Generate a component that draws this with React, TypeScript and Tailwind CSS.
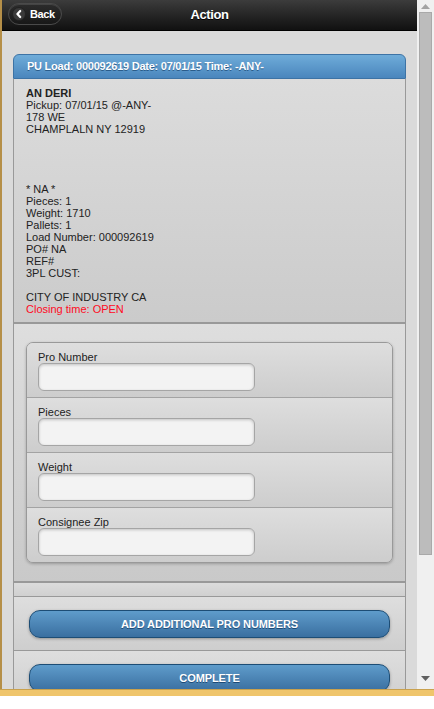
function BackIcon() {
  return (
    <svg width="14" height="14" viewBox="0 0 14 14">
      <circle cx="7" cy="7" r="6.5" fill="#3a3a3a" stroke="#222" />
      <path d="M8.2 4 L5.4 7 L8.2 10" fill="none" stroke="#fff" strokeWidth="2.2" strokeLinecap="round" strokeLinejoin="round" />
    </svg>
  );
}

function Field({ label, last }: { label: string; last?: boolean }) {
  return (
    <div
      className={
        "bg-gradient-to-b from-[#dedede] to-[#cdcdcd] px-[11px] pt-[7px] pb-[6px] " +
        (last ? "" : "border-b border-[#a3a3a3]")
      }
    >
      <div className="h-[14px] text-[11px] leading-[14px] text-[#222]">{label}</div>
      <div className="mt-[-1px] h-[28px] w-[217px] rounded-[6px] border border-[#a5a5a5] bg-[#f3f3f3] shadow-[inset_0_1px_3px_rgba(0,0,0,0.2)]" />
    </div>
  );
}

function BlueButton({ text }: { text: string }) {
  return (
    <div className="flex h-[28px] w-[361px] items-center justify-center rounded-[11px] border border-[#1d4d75] bg-gradient-to-b from-[#5f9ccb] to-[#3a6fa0] text-[11px] font-bold tracking-[-0.1px] text-white shadow-[0_1px_3px_rgba(0,0,0,0.3)] [text-shadow:0_1px_0_#1d4a76]">
      {text}
    </div>
  );
}

export default function App() {
  return (
    <div className="flex h-[709px] w-[434px] flex-col bg-white font-['Liberation_Sans',Arial,sans-serif]">
      <div className="flex h-[689px]">
        <div className="w-[2px] bg-[#b58f48]" />

        <div className="flex w-[415px] flex-col overflow-hidden bg-[#dadada]">
          {/* header */}
          <div className="relative flex h-[31px] shrink-0 items-center justify-center border-b border-[#000] bg-gradient-to-b from-[#3c3c3c] to-[#111]">
            <div className="text-[13px] font-bold tracking-[-0.4px] text-white [text-shadow:0_1px_0_#000]">Action</div>
            <div className="absolute left-[6px] top-[3px] flex h-[22px] w-[54px] items-center gap-[4px] rounded-full border border-[#4a4a4a] bg-gradient-to-b from-[#2c2c2c] to-[#181818] pl-[3px] shadow-[inset_0_1px_0_rgba(255,255,255,0.12)]">
              <BackIcon />
              <span className="text-[11px] font-bold tracking-[-0.4px] text-white">Back</span>
            </div>
          </div>

          <div className="px-[11px] pt-[23px]">
            {/* collapsible */}
            <div className="flex h-[25px] items-center rounded-t-[6px] border border-[#3d73a5] bg-gradient-to-b from-[#6facd9] to-[#4a86bd] pl-[13px] text-[11px] font-bold tracking-[-0.25px] text-white [text-shadow:0_1px_0_#2a5c8a]">
              PU Load: 000092619 Date: 07/01/15 Time: -ANY-
            </div>
            <div className="border-x border-b-2 border-[#999] bg-gradient-to-b from-[#dcdcdc] to-[#cbcbcb] pl-[12px] pt-[8px] pb-[7px] text-[11px] leading-[12px] text-[#222]">
              <div className="font-bold">AN DERI</div>
              <div>Pickup: 07/01/15 @-ANY-</div>
              <div>178 WE</div>
              <div>CHAMPLALN NY 12919</div>
              <div className="h-[48px]" />
              <div>* NA *</div>
              <div>Pieces: 1</div>
              <div>Weight: 1710</div>
              <div>Pallets: 1</div>
              <div>Load Number: 000092619</div>
              <div>PO# NA</div>
              <div>REF#</div>
              <div>3PL CUST:</div>
              <div className="h-[12px]" />
              <div>CITY OF INDUSTRY CA</div>
              <div className="text-[#ff0a1e]">Closing time: OPEN</div>
            </div>

            {/* form */}
            <div className="border-x border-b-2 border-[#999] bg-gradient-to-b from-[#dedede] to-[#c9c9c9] px-[12px] pt-[18px] pb-[18px]">
              <div className="overflow-hidden rounded-[7px] border border-[#999] shadow-[0_1px_3px_rgba(0,0,0,0.25)]">
                <Field label="Pro Number" />
                <Field label="Pieces" />
                <Field label="Weight" />
                <Field label="Consignee Zip" last />
              </div>
            </div>

            <div className="h-[14px] border-x border-b border-[#999] bg-gradient-to-b from-[#dcdcdc] to-[#d0d0d0]" />

            <div className="border-x border-b border-[#999] bg-gradient-to-b from-[#dedede] to-[#cecece] px-[15px] pt-[13px] pb-[12px]">
              <BlueButton text="ADD ADDITIONAL PRO NUMBERS" />
            </div>

            <div className="border-x border-[#999] bg-gradient-to-b from-[#dedede] to-[#cecece] px-[15px] pt-[13px] pb-[12px]">
              <BlueButton text="COMPLETE" />
            </div>
          </div>
        </div>

        {/* scrollbar */}
        <div className="flex w-[17px] flex-col items-center bg-[#f0f0f0]">
          <svg width="9" height="5" viewBox="0 0 9 5" className="mt-[4px]">
            <path d="M0 5 L4.5 0 L9 5 Z" fill="#a3a3a3" />
          </svg>
          <div className="mt-[3px] h-[543px] w-[13px] border border-[#a9a9a9] bg-[#bcbcbc]" />
          <div className="flex-1" />
          <svg width="9" height="5" viewBox="0 0 9 5" className="mb-[8px]">
            <path d="M0 0 L9 0 L4.5 5 Z" fill="#606060" />
          </svg>
        </div>
      </div>
      <div className="h-[7px] border-t border-[#c9a14e] bg-[#efc56c]" />
      <div className="flex-1 bg-white" />
    </div>
  );
}
